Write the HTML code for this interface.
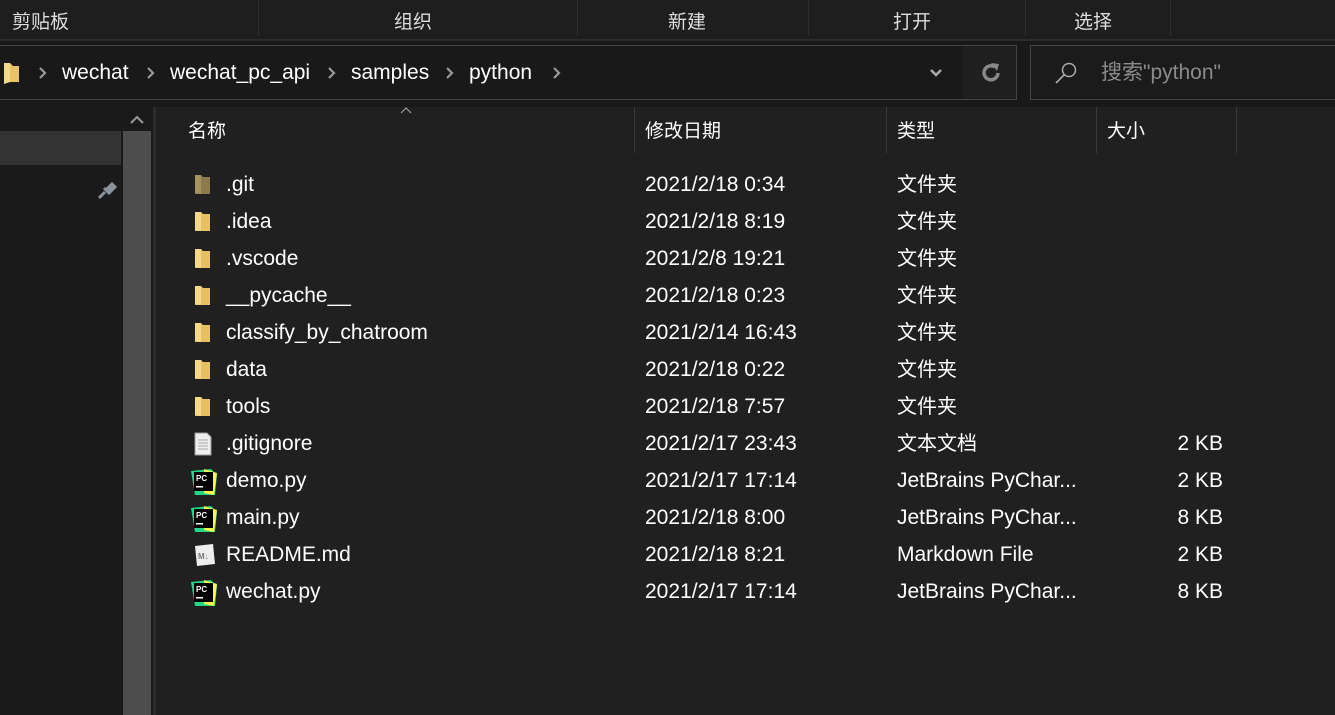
<!DOCTYPE html><html><head><meta charset="utf-8"><style>
body{margin:0;width:1335px;height:715px;background:#202020;overflow:hidden;font-family:"Liberation Sans","Noto Sans CJK SC",sans-serif;color:#fff;position:relative}
.a{position:absolute}
.t{font-size:21px;white-space:nowrap;line-height:26px}
.sep{position:absolute;top:0;width:1px;height:36px;background:#2e2e2e}
.rb{font-size:19px;color:#ddd;top:10px;line-height:26px}
.row{position:absolute;left:0;width:1335px;height:37px}
.row .n{left:226px;top:5px}
.row .d{left:645px;top:5px}
.row .ty{left:897px;top:5px}
.row .ty.c{font-size:20px}
.row .s{right:112px;top:5px}
.ic{position:absolute;left:193px;top:5px}
.ch{position:absolute;top:66px}
</style></head><body>
<div class="a" style="left:0;top:0;width:1335px;height:40px;background:#1e1e1e"></div>
<div class="sep" style="left:258px"></div><div class="sep" style="left:577px"></div><div class="sep" style="left:808px"></div><div class="sep" style="left:1025px"></div><div class="sep" style="left:1170px"></div>
<div class="a rb" style="left:12px">剪贴板</div>
<div class="a rb" style="left:394px">组织</div>
<div class="a rb" style="left:668px">新建</div>
<div class="a rb" style="left:893px">打开</div>
<div class="a rb" style="left:1074px">选择</div>
<div class="a" style="left:0;top:39px;width:1335px;height:2px;background:#2b2b2b"></div>
<div class="a" style="left:0;top:41px;width:1335px;height:66px;background:#191919"></div>
<div class="a" style="left:-2px;top:45px;width:1019px;height:55px;border:1px solid #444;box-sizing:border-box"></div>
<div class="a" style="left:963px;top:46px;width:53px;height:53px;background:#1f1f1f"></div>
<div class="a" style="left:1030px;top:45px;width:320px;height:55px;border:1px solid #444;box-sizing:border-box;background:#1b1b1b"></div>
<svg class="a" style="left:3px;top:61px" width="18" height="24"><path d="M1 2h6l3 3h6v16H4l-3 2z" fill="#e8c466"/><path d="M1 2h6v19l-6 2z" fill="#f3d98a"/></svg>
<svg class="ch" style="left:38px" width="10" height="14"><path d="M2 2l5 5-5 5" stroke="#999" stroke-width="2.2" fill="none"/></svg>
<div class="a t" style="left:62px;top:60px">wechat</div>
<svg class="ch" style="left:146px" width="10" height="14"><path d="M2 2l5 5-5 5" stroke="#999" stroke-width="2.2" fill="none"/></svg>
<div class="a t" style="left:170px;top:60px">wechat_pc_api</div>
<svg class="ch" style="left:327px" width="10" height="14"><path d="M2 2l5 5-5 5" stroke="#999" stroke-width="2.2" fill="none"/></svg>
<div class="a t" style="left:351px;top:60px">samples</div>
<svg class="ch" style="left:445px" width="10" height="14"><path d="M2 2l5 5-5 5" stroke="#999" stroke-width="2.2" fill="none"/></svg>
<div class="a t" style="left:469px;top:60px">python</div>
<svg class="ch" style="left:552px" width="10" height="14"><path d="M2 2l5 5-5 5" stroke="#999" stroke-width="2.2" fill="none"/></svg>
<svg class="a" style="left:928px;top:67px" width="16" height="12"><path d="M3 3l5 5 5-5" stroke="#aaa" stroke-width="2.5" fill="none"/></svg>
<svg class="a" style="left:979px;top:61px" width="24" height="24"><path d="M16 6A7 7 0 1 0 19 12" stroke="#888" stroke-width="3.5" fill="none"/><path d="M12 2l8 1-2 7z" fill="#888"/></svg>
<svg class="a" style="left:1053px;top:60px" width="26" height="26"><circle cx="16" cy="10" r="6.5" stroke="#aaa" stroke-width="1.5" fill="none"/><path d="M11.5 14.5L3 23" stroke="#aaa" stroke-width="1.6"/></svg>
<div class="a t" style="left:1101px;top:60px;color:#8a8a8a">搜索"python"</div>
<div class="a" style="left:0;top:107px;width:153px;height:608px;background:#1a1a1a"></div>
<div class="a" style="left:0;top:131px;width:121px;height:34px;background:#333"></div>
<div class="a" style="left:123px;top:131px;width:28px;height:584px;background:#4d4d4d"></div>
<svg class="a" style="left:128px;top:114px" width="18" height="12"><path d="M3 9l6-6 6 6" stroke="#999" stroke-width="2" fill="none"/></svg>
<svg class="a" style="left:97px;top:178px" width="22" height="22"><path d="M2 20l6-6M7 10l6 6M9 12l6-6 3 3-6 6z" stroke="#8a939b" stroke-width="3" fill="#8a939b"/></svg>
<div class="a" style="left:153px;top:107px;width:3px;height:608px;background:#2a2a2a"></div>
<div class="a" style="left:157px;top:107px;width:1178px;height:608px;background:#202020"></div>
<svg class="a" style="left:399px;top:106px" width="14" height="9"><path d="M2 7l5-5 5 5" stroke="#aaa" stroke-width="1" fill="none"/></svg>
<div class="a t" style="left:188px;top:119px;font-size:19px">名称</div>
<div class="a" style="left:634px;top:107px;width:1px;height:46px;background:#3a3a3a"></div>
<div class="a t" style="left:645px;top:119px;font-size:19px">修改日期</div>
<div class="a" style="left:886px;top:107px;width:1px;height:46px;background:#3a3a3a"></div>
<div class="a t" style="left:897px;top:119px;font-size:19px">类型</div>
<div class="a" style="left:1096px;top:107px;width:1px;height:46px;background:#3a3a3a"></div>
<div class="a t" style="left:1107px;top:119px;font-size:19px">大小</div>
<div class="a" style="left:1236px;top:107px;width:1px;height:46px;background:#3a3a3a"></div>

<div style="position:absolute;left:0;top:167px">
<div class="row" style="top:0"><svg class="ic" width="20" height="26"><path d="M2 3h6l2 2h7v17H2z" fill="#8a7a4e"/><path d="M2 3h6v19l-6-1z" fill="#a6925c"/></svg><div class="a t n">.git</div><div class="a t d">2021/2/18 0:34</div><div class="a t ty c">文件夹</div></div>
<div class="row" style="top:37px"><svg class="ic" width="20" height="26"><path d="M2 3h6l2 2h7v17H2z" fill="#e6c063"/><path d="M2 3h6v19l-6-1z" fill="#f5d88a"/></svg><div class="a t n">.idea</div><div class="a t d">2021/2/18 8:19</div><div class="a t ty c">文件夹</div></div>
<div class="row" style="top:74px"><svg class="ic" width="20" height="26"><path d="M2 3h6l2 2h7v17H2z" fill="#e6c063"/><path d="M2 3h6v19l-6-1z" fill="#f5d88a"/></svg><div class="a t n">.vscode</div><div class="a t d">2021/2/8 19:21</div><div class="a t ty c">文件夹</div></div>
<div class="row" style="top:111px"><svg class="ic" width="20" height="26"><path d="M2 3h6l2 2h7v17H2z" fill="#e6c063"/><path d="M2 3h6v19l-6-1z" fill="#f5d88a"/></svg><div class="a t n">__pycache__</div><div class="a t d">2021/2/18 0:23</div><div class="a t ty c">文件夹</div></div>
<div class="row" style="top:148px"><svg class="ic" width="20" height="26"><path d="M2 3h6l2 2h7v17H2z" fill="#e6c063"/><path d="M2 3h6v19l-6-1z" fill="#f5d88a"/></svg><div class="a t n">classify_by_chatroom</div><div class="a t d">2021/2/14 16:43</div><div class="a t ty c">文件夹</div></div>
<div class="row" style="top:185px"><svg class="ic" width="20" height="26"><path d="M2 3h6l2 2h7v17H2z" fill="#e6c063"/><path d="M2 3h6v19l-6-1z" fill="#f5d88a"/></svg><div class="a t n">data</div><div class="a t d">2021/2/18 0:22</div><div class="a t ty c">文件夹</div></div>
<div class="row" style="top:222px"><svg class="ic" width="20" height="26"><path d="M2 3h6l2 2h7v17H2z" fill="#e6c063"/><path d="M2 3h6v19l-6-1z" fill="#f5d88a"/></svg><div class="a t n">tools</div><div class="a t d">2021/2/18 7:57</div><div class="a t ty c">文件夹</div></div>
<div class="row" style="top:259px"><svg class="ic" width="20" height="26"><path d="M2 2h12l4 4v18H2z" fill="#eee" stroke="#999"/><path d="M5 9h10M5 12h10M5 15h10M5 18h10" stroke="#aaa"/></svg><div class="a t n">.gitignore</div><div class="a t d">2021/2/17 23:43</div><div class="a t ty c">文本文档</div><div class="a t s">2 KB</div></div>
<div class="row" style="top:296px"><svg class="ic" style="left:190px" width="28" height="28"><path d="M1 3l20-2 6 6-2 20-20 0z" fill="#21d789"/><path d="M14 1l13 4-3 22-10-2z" fill="#fcf84a"/><rect x="4" y="4" width="19" height="19" fill="#000"/><text x="6" y="13" font-size="8" font-family="Liberation Sans" font-weight="bold" fill="#fff">PC</text><rect x="6" y="18" width="7" height="1.5" fill="#fff"/></svg><div class="a t n">demo.py</div><div class="a t d">2021/2/17 17:14</div><div class="a t ty">JetBrains PyChar...</div><div class="a t s">2 KB</div></div>
<div class="row" style="top:333px"><svg class="ic" style="left:190px" width="28" height="28"><path d="M1 3l20-2 6 6-2 20-20 0z" fill="#21d789"/><path d="M14 1l13 4-3 22-10-2z" fill="#fcf84a"/><rect x="4" y="4" width="19" height="19" fill="#000"/><text x="6" y="13" font-size="8" font-family="Liberation Sans" font-weight="bold" fill="#fff">PC</text><rect x="6" y="18" width="7" height="1.5" fill="#fff"/></svg><div class="a t n">main.py</div><div class="a t d">2021/2/18 8:00</div><div class="a t ty">JetBrains PyChar...</div><div class="a t s">8 KB</div></div>
<div class="row" style="top:370px"><svg class="ic" width="24" height="26"><path d="M2 4l18-2 2 20-18 2z" fill="#eee"/><text x="5" y="17" font-size="8" font-family="Liberation Sans" font-weight="bold" fill="#777">M↓</text></svg><div class="a t n">README.md</div><div class="a t d">2021/2/18 8:21</div><div class="a t ty">Markdown File</div><div class="a t s">2 KB</div></div>
<div class="row" style="top:407px"><svg class="ic" style="left:190px" width="28" height="28"><path d="M1 3l20-2 6 6-2 20-20 0z" fill="#21d789"/><path d="M14 1l13 4-3 22-10-2z" fill="#fcf84a"/><rect x="4" y="4" width="19" height="19" fill="#000"/><text x="6" y="13" font-size="8" font-family="Liberation Sans" font-weight="bold" fill="#fff">PC</text><rect x="6" y="18" width="7" height="1.5" fill="#fff"/></svg><div class="a t n">wechat.py</div><div class="a t d">2021/2/17 17:14</div><div class="a t ty">JetBrains PyChar...</div><div class="a t s">8 KB</div></div>
</div>
</body></html>
